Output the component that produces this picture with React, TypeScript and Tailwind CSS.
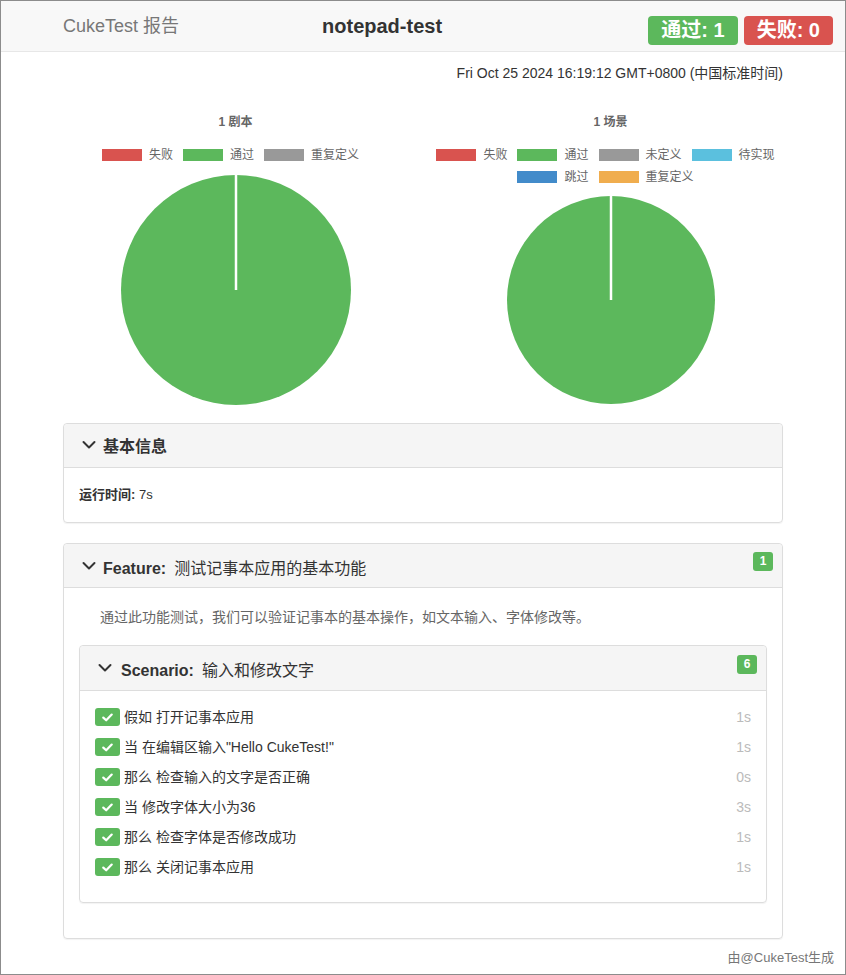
import React from "react";

const FONT = { fontFamily: '"Liberation Sans", Arial, "Noto Sans CJK SC", sans-serif' };

function Chevron({ className = "" }: { className?: string }) {
  return (
    <svg width="14" height="14" viewBox="0 0 14 14" className={className}>
      <path d="M1.5 4 L7 9.5 L12.5 4" fill="none" stroke="#333" strokeWidth="2" strokeLinecap="round" strokeLinejoin="round" />
    </svg>
  );
}

function Check() {
  return (
    <div className="w-[25px] h-[18px] rounded-[3px] bg-[#5cb85c] flex items-center justify-center shrink-0">
      <svg width="11" height="9" viewBox="0 0 11 9">
        <path d="M1.3 4.6 L4.2 7.3 L9.7 1.6" fill="none" stroke="#fff" strokeWidth="2.2" strokeLinecap="round" strokeLinejoin="round" />
      </svg>
    </div>
  );
}

function Pie({ r }: { r: number }) {
  const s = r * 2;
  return (
    <svg width={s} height={s} viewBox={`0 0 ${s} ${s}`}>
      <circle cx={r} cy={r} r={r} fill="#5cb85c" />
      <line x1={r} y1={0} x2={r} y2={r} stroke="#fff" strokeWidth="2.5" />
    </svg>
  );
}

function LegendItem({ color, label }: { color: string; label: string }) {
  return (
    <div className="flex items-center gap-[7px] shrink-0 whitespace-nowrap">
      <div className="w-[40px] h-[12px] shrink-0" style={{ backgroundColor: color }} />
      <span className="text-[12px] leading-[14px] text-[#666]">{label}</span>
    </div>
  );
}

const steps = [
  ["假如", "打开记事本应用", "1s"],
  ["当", '在编辑区输入"Hello CukeTest!"', "1s"],
  ["那么", "检查输入的文字是否正确", "0s"],
  ["当", "修改字体大小为36", "3s"],
  ["那么", "检查字体是否修改成功", "1s"],
  ["那么", "关闭记事本应用", "1s"],
];

export default function App() {
  return (
    <div style={FONT} className="w-[846px] h-[975px] box-border border border-[#8c8c8c] bg-white text-[#333] overflow-hidden">
      {/* Header */}
      <div className="h-[51px] bg-[#f8f8f8] border-b border-[#e7e7e7] flex items-center">
        <div className="pl-[62px] text-[18px] text-[#777] leading-[20px]">CukeTest 报告</div>
        <div className="ml-[143px] text-[20px] font-bold text-[#333] leading-[22px] -mt-[1px]">notepad-test</div>
        <div className="ml-auto mr-[12px] flex gap-[6px] translate-y-[4px]">
          <div className="h-[29px] px-[13px] rounded-[4px] bg-[#5cb85c] text-white font-bold text-[20px] leading-[29px]">通过: 1</div>
          <div className="h-[29px] px-[13px] rounded-[4px] bg-[#d9534f] text-white font-bold text-[20px] leading-[29px]">失败: 0</div>
        </div>
      </div>

      <div className="w-[720px] mx-auto">
        <div className="mt-[11px] text-right text-[14px] leading-[20px] text-[#333]">
          Fri Oct 25 2024 16:19:12 GMT+0800 (中国标准时间)
        </div>

        {/* Charts */}
        <div className="flex gap-[30px]">
          <div className="w-[345px] flex flex-col items-center">
            <div className="mt-[32px] h-[14px] text-[12px] leading-[14px] font-bold text-[#666]">1 剧本</div>
            <div className="mt-[19px] -translate-x-[5px] flex gap-[10px]">
              <LegendItem color="#d9534f" label="失败" />
              <LegendItem color="#5cb85c" label="通过" />
              <LegendItem color="#999999" label="重复定义" />
            </div>
            <div className="mt-[13px]">
              <Pie r={115} />
            </div>
          </div>
          <div className="w-[345px] flex flex-col items-center">
            <div className="mt-[32px] h-[14px] text-[12px] leading-[14px] font-bold text-[#666]">1 场景</div>
            <div className="mt-[19px] -translate-x-[5px] flex gap-[10px] whitespace-nowrap">
              <LegendItem color="#d9534f" label="失败" />
              <LegendItem color="#5cb85c" label="通过" />
              <LegendItem color="#999999" label="未定义" />
              <LegendItem color="#5bc0de" label="待实现" />
            </div>
            <div className="mt-[8px] -translate-x-[5px] flex gap-[10px]">
              <LegendItem color="#428bca" label="跳过" />
              <LegendItem color="#f0ad4e" label="重复定义" />
            </div>
            <div className="mt-[12px]">
              <Pie r={104} />
            </div>
          </div>
        </div>

        {/* Basic info panel */}
        <div className="mt-[18px] border border-[#ddd] rounded-[4px] shadow-[0_1px_1px_rgba(0,0,0,0.05)]">
          <div className="h-[44px] bg-[#f5f5f5] border-b border-[#ddd] rounded-t-[4px] flex items-center pl-[18px]">
            <Chevron className="mr-[7px] -mt-[2px]" />
            <span className="text-[16px] font-bold text-[#333] translate-y-[1px]">基本信息</span>
          </div>
          <div className="px-[15px] py-[15px] text-[13px] leading-[24px]">
            <span className="font-bold">运行时间:</span> 7s
          </div>
        </div>

        {/* Feature panel */}
        <div className="mt-[20px] border border-[#ddd] rounded-[4px] shadow-[0_1px_1px_rgba(0,0,0,0.05)]">
          <div className="relative h-[44px] bg-[#f5f5f5] border-b border-[#ddd] rounded-t-[4px] flex items-center pl-[18px]">
            <Chevron className="mr-[7px]" />
            <span className="text-[16px] font-bold text-[#333] translate-y-[3px]">Feature:</span>
            <span className="text-[16px] text-[#333] ml-[8px] translate-y-[3px]">测试记事本应用的基本功能</span>
            <div className="absolute right-[9px] top-[8px] w-[20px] h-[19px] rounded-[3px] bg-[#5cb85c] text-white text-[12px] font-bold leading-[19px] text-center">1</div>
          </div>
          <div className="px-[15px] pt-[17px] pb-[35px]">
            <div className="pl-[21px] text-[14px] leading-[24px] text-[#666]">
              通过此功能测试，我们可以验证记事本的基本操作，如文本输入、字体修改等。
            </div>
            <div className="mt-[16px] border border-[#ddd] rounded-[4px] shadow-[0_1px_1px_rgba(0,0,0,0.05)]">
              <div className="relative h-[45px] bg-[#f5f5f5] border-b border-[#ddd] rounded-t-[4px] flex items-center pl-[18px]">
                <Chevron className="mr-[9px]" />
                <span className="text-[16px] font-bold text-[#333] translate-y-[3px]">Scenario:</span>
                <span className="text-[16px] text-[#333] ml-[8px] translate-y-[3px]">输入和修改文字</span>
                <div className="absolute right-[9px] top-[9px] w-[20px] h-[19px] rounded-[3px] bg-[#5cb85c] text-white text-[12px] font-bold leading-[19px] text-center">6</div>
              </div>
              <div className="px-[15px] pt-[11px] pb-[20px]">
                {steps.map(([kw, text, dur], i) => (
                  <div key={i} className="h-[30px] flex items-center">
                    <Check />
                    <span className="ml-[4px] text-[14px] text-[#333]">
                      {kw} {text}
                    </span>
                    <span className="ml-auto text-[14px] text-[#bbb]">{dur}</span>
                  </div>
                ))}
              </div>
            </div>
          </div>
        </div>
      </div>

      <div className="mt-[10px] pr-[11px] text-right text-[13px] leading-[18px] text-[#777]">由@CukeTest生成</div>
    </div>
  );
}
